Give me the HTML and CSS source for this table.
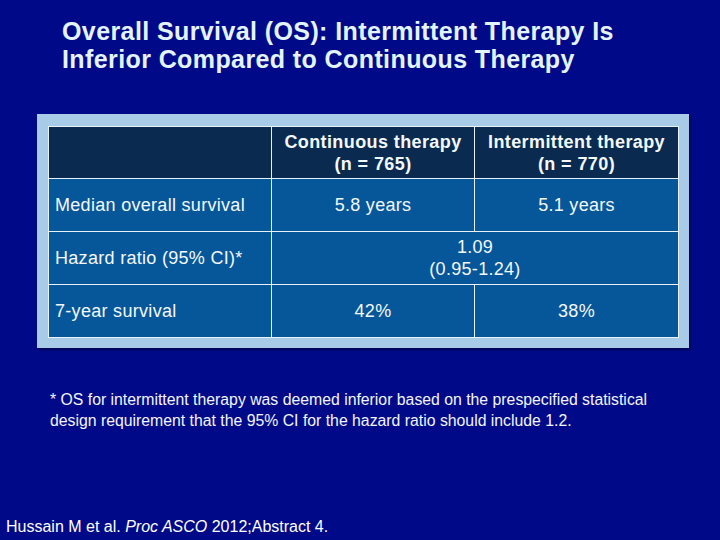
FILE: index.html
```html
<!DOCTYPE html>
<html>
<head>
<meta charset="utf-8">
<link rel="stylesheet" href="styles.css">
</head>
<body>
<div class="slide">
  <h1 class="title">Overall Survival (OS): Intermittent Therapy Is<br>Inferior Compared to Continuous Therapy</h1>
  <div class="frame">
    <table class="data">
      <tr class="head">
        <th class="c1"></th>
        <th class="c2">Continuous therapy<br>(n = 765)</th>
        <th class="c3">Intermittent therapy<br>(n = 770)</th>
      </tr>
      <tr>
        <td class="label">Median overall survival</td>
        <td>5.8 years</td>
        <td>5.1 years</td>
      </tr>
      <tr>
        <td class="label">Hazard ratio (95% CI)*</td>
        <td colspan="2">1.09<br>(0.95-1.24)</td>
      </tr>
      <tr>
        <td class="label">7-year survival</td>
        <td>42%</td>
        <td>38%</td>
      </tr>
    </table>
  </div>
  <p class="note">* OS for intermittent therapy was deemed inferior based on the prespecified statistical design requirement that the 95% CI for the hazard ratio should include 1.2.</p>
  <p class="cite">Hussain M et al. <i>Proc ASCO</i> 2012;Abstract 4.</p>
</div>
</body>
</html>
```
FILE: styles.css
```css
html, body {
  margin: 0;
  padding: 0;
  background: #000a88;
}
.slide {
  width: 720px;
  height: 540px;
  background: #000a88;
  font-family: "Liberation Sans", Arial, sans-serif;
  color: #ffffff;
  display: flex;
  flex-direction: column;
  overflow: hidden;
}
.title {
  margin: 17px 0 0 62px;
  font-size: 25px;
  line-height: 28px;
  letter-spacing: 0.4px;
  font-weight: bold;
  color: #e4f4ff;
}
.frame {
  margin: 41px 0 0 37px;
  width: 631px;
  padding: 12px 10px 10px 11px;
  background: #a8cce8;
  box-shadow: 2px 2px 2px #000655;
}
.data {
  border-collapse: collapse;
  width: 631px;
  table-layout: fixed;
  border: 1px solid #e8f0f8;
}
.data td, .data th {
  border: 1px solid #e8f0f8;
  height: 52px;
  padding: 0;
  text-align: center;
  vertical-align: middle;
  font-size: 18px;
  line-height: 22px;
  letter-spacing: 0.3px;
  color: #f4f8ff;
  background: #06569a;
}
.data th {
  height: 51px;
  font-weight: bold;
  letter-spacing: 0.4px;
  background: #0a2b4f;
}
.c1 { width: 222px; }
.c2 { width: 202px; }
.data td.label {
  text-align: left;
  padding-left: 6px;
}
.note {
  margin: 41px 0 0 50px;
  width: 615px;
  font-size: 15.8px;
  line-height: 21px;
  color: #f4f4ff;
}
.cite {
  margin: auto 0 4px 6px;
  font-size: 16px;
  line-height: 18px;
  color: #ffffff;
}
```
